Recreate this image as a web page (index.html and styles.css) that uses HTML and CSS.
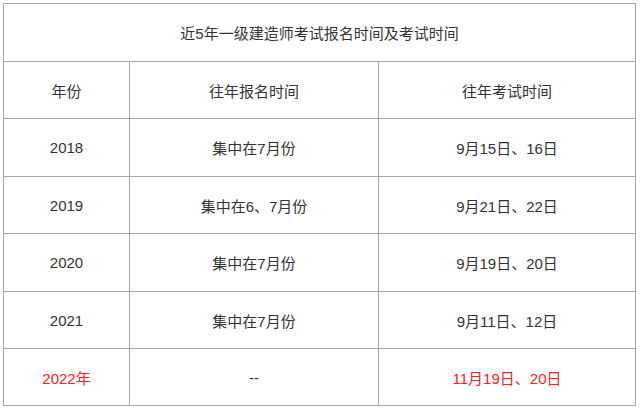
FILE: index.html
```html
<!DOCTYPE html>
<html lang="zh">
<head>
<meta charset="utf-8">
<link rel="stylesheet" href="styles.css">
</head>
<body>
<table class="exam">
  <colgroup>
    <col class="c1"><col class="c2"><col class="c3">
  </colgroup>
  <tr class="r-a"><td colspan="3">近5年一级建造师考试报名时间及考试时间</td></tr>
  <tr class="r-b"><td>年份</td><td>往年报名时间</td><td>往年考试时间</td></tr>
  <tr class="r-a"><td>2018</td><td>集中在7月份</td><td>9月15日、16日</td></tr>
  <tr class="r-b"><td>2019</td><td>集中在6、7月份</td><td>9月21日、22日</td></tr>
  <tr class="r-a"><td>2020</td><td>集中在7月份</td><td>9月19日、20日</td></tr>
  <tr class="r-b"><td>2021</td><td>集中在7月份</td><td>9月11日、12日</td></tr>
  <tr class="r-b hl"><td>2022年</td><td>--</td><td>11月19日、20日</td></tr>
</table>
</body>
</html>
```
FILE: styles.css
```css
html, body {
  margin: 0;
  padding: 0;
  background: #ffffff;
}
.exam {
  margin: 3px 0 0 3px;
  width: 632px;
  border-collapse: collapse;
  table-layout: fixed;
  font-family: "Liberation Sans", Arial, "Noto Sans CJK SC", sans-serif;
  font-size: 15px;
  color: #333333;
}
.c1 { width: 126px; }
.c2 { width: 249px; }
.c3 { width: 257px; }
.exam td {
  border: 1px solid #a4a4ae;
  text-align: center;
  vertical-align: middle;
  padding: 0;
}
.r-a { height: 58px; }
.r-b { height: 57px; }
.hl td { color: #ff2020; }
.hl td:nth-child(2) { color: #333333; }
```
